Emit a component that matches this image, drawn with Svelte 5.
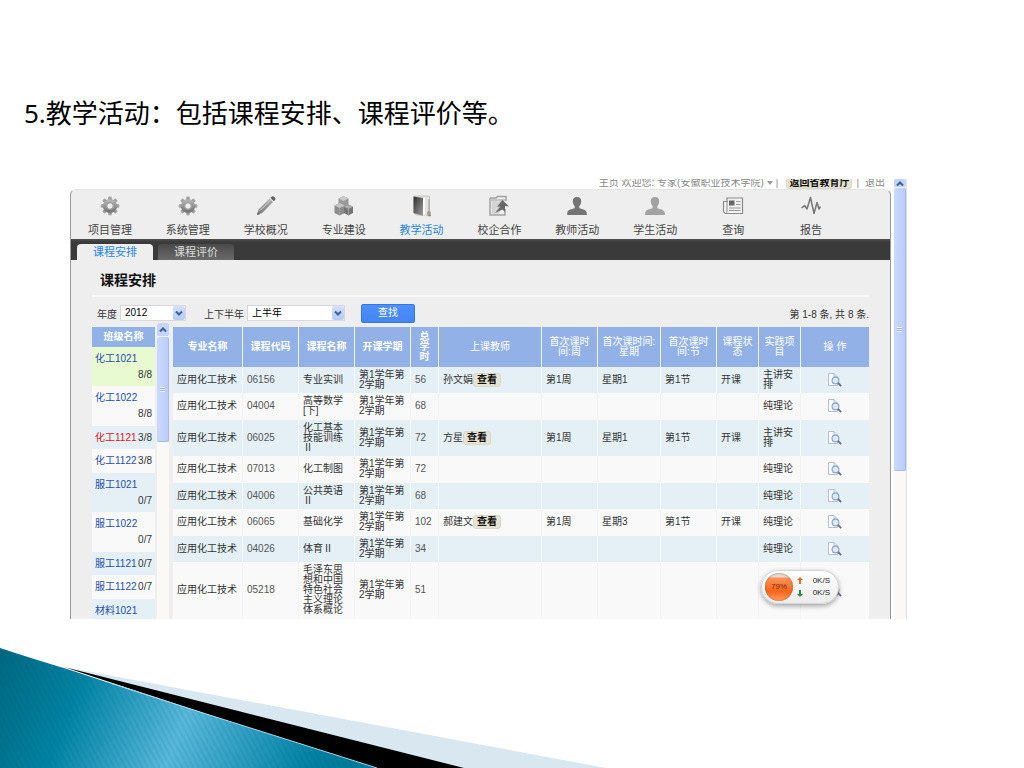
<script lang="ts">
  const nav = [
    { label: '项目管理', icon: 'gear' },
    { label: '系统管理', icon: 'gear' },
    { label: '学校概况', icon: 'pencil' },
    { label: '专业建设', icon: 'cubes' },
    { label: '教学活动', icon: 'door', active: true },
    { label: '校企合作', icon: 'share' },
    { label: '教师活动', icon: 'person' },
    { label: '学生活动', icon: 'person-light' },
    { label: '查询', icon: 'news' },
    { label: '报告', icon: 'pulse' },
  ];

  const classes = [
    { name: '化工1021', count: '8/8', stacked: true, selected: true },
    { name: '化工1022', count: '8/8', stacked: true },
    { name: '化工1121', count: '3/8', alert: true },
    { name: '化工1122', count: '3/8' },
    { name: '服工1021', count: '0/7', stacked: true },
    { name: '服工1022', count: '0/7', stacked: true },
    { name: '服工1121', count: '0/7' },
    { name: '服工1122', count: '0/7' },
    { name: '材料1021', count: '' },
  ];

  const columns = [
    { key: 'major', lines: ['专业名称'], bold: true },
    { key: 'code', lines: ['课程代码'], bold: true },
    { key: 'course', lines: ['课程名称'], bold: true },
    { key: 'term', lines: ['开课学期'], bold: true },
    { key: 'hours', lines: ['总', '学', '时'], bold: true },
    { key: 'teacher', lines: ['上课教师'] },
    { key: 'week', lines: ['首次课时', '间:周'] },
    { key: 'day', lines: ['首次课时间:', '星期'] },
    { key: 'slot', lines: ['首次课时', '间:节'] },
    { key: 'state', lines: ['课程状', '态'] },
    { key: 'kind', lines: ['实践项', '目'] },
    { key: 'action', lines: ['操 作'] },
  ];

  const major = '应用化工技术';
  const rows = [
    { code: '06156', course: ['专业实训'], hours: 56, teacher: '孙文娟', week: '第1周', day: '星期1', slot: '第1节', state: '开课', kind: ['主讲安', '排'] },
    { code: '04004', course: ['高等数学', '[下]'], hours: 68, kind: ['纯理论'] },
    { code: '06025', course: ['化工基本', '技能训练', 'Ⅱ'], hours: 72, teacher: '方星', week: '第1周', day: '星期1', slot: '第1节', state: '开课', kind: ['主讲安', '排'] },
    { code: '07013', course: ['化工制图'], hours: 72, kind: ['纯理论'] },
    { code: '04006', course: ['公共英语', 'Ⅱ'], hours: 68, kind: ['纯理论'] },
    { code: '06065', course: ['基础化学'], hours: 102, teacher: '郝建文', week: '第1周', day: '星期3', slot: '第1节', state: '开课', kind: ['纯理论'] },
    { code: '04026', course: ['体育Ⅱ'], hours: 34, kind: ['纯理论'] },
    { code: '05218', course: ['毛泽东思', '想和中国', '特色社会', '主义理论', '体系概论'], hours: 51, kind: ['纯理论'] },
  ];

  const teeth = [0, 45, 90, 135, 180, 225, 270, 315];
</script>

{#snippet stack(lines)}
  {#each lines as line, i}{#if i}<br />{/if}{line}{/each}
{/snippet}

{#snippet chevron(up)}
  <svg viewBox="0 0 10 10" width="10" height="10" aria-hidden="true">
    <path d={up ? 'M2 6.5 5 3.5 8 6.5' : 'M2 3.5 5 6.5 8 3.5'} fill="none" stroke="#3f5f9c" stroke-width="2" />
  </svg>
{/snippet}

{#snippet navIcon(kind)}
  <svg viewBox="0 0 22 22" width="22" height="22" aria-hidden="true">
    {#if kind === 'gear'}
      {#each teeth as a}
        <rect x="9.2" y="1.6" width="3.6" height="5" rx="0.8" fill="url(#metal)" transform="rotate({a} 11 11)" />
      {/each}
      <circle cx="11" cy="11" r="5.3" fill="none" stroke="url(#metal)" stroke-width="3.6" />
      <circle cx="11" cy="11" r="3.3" fill="#eee" stroke="#777" stroke-width="0.8" />
    {:else if kind === 'pencil'}
      <path d="M2 20 3.6 14.6 14.6 3.6 18 7 7.2 18Z" fill="url(#metal)" />
      <path d="M5 15.6 15.6 5" stroke="#d0d0d0" stroke-width="1" />
      <path d="M15.4 2.8 17 1.4Q18 .8 19 1.8L20.2 3Q21 4 20 5L18.8 6.2Z" fill="#606060" />
      <path d="M2 20 2.8 17.2 4.8 19.2Z" fill="#666" />
    {:else if kind === 'cubes'}
      <path d="M10.5 1 15.5 3.5V10L10.5 12.5 5.5 10V3.5Z" fill="#999" />
      <path d="M10.5 1 15.5 3.5 10.5 6 5.5 3.5Z" fill="#cacaca" />
      <path d="M6.5 8 12 10.5V18L6.5 20.5 1.5 18V10.5Z" fill="#8d8d8d" />
      <path d="M6.5 8 12 10.5 6.8 13 1.5 10.5Z" fill="#c4c4c4" />
      <path d="M15.5 9.5 20 11.7V18L15.5 20.5 11 18V11.7Z" fill="#767676" />
      <path d="M15.5 9.5 20 11.7 15.6 14 11 11.7Z" fill="#adadad" />
      <path d="M15.5 14V20.5M6.7 13V20.5" stroke="#aaa" stroke-width="0.7" />
    {:else if kind === 'door'}
      <path d="M3 1H18.5V20H5L3 18Z" fill="#e4e4e0" stroke="#b6b6b0" stroke-width="0.7" />
      <path d="M2.5 1.5 12 3V21L2.5 18Z" fill="url(#panel)" />
      <path d="M12 3 14 2V19L12 21Z" fill="#fafafa" />
      <path d="M18 4V17" stroke="#aba59a" stroke-width="1.2" />
      <circle cx="18" cy="18" r="2" fill="#a39b8d" />
      <path d="M16.5 20.5H20" stroke="#918a80" stroke-width="1.4" />
    {:else if kind === 'share'}
      <path d="M2 3H8L9.5 1.5H18V6M2 3V20H17V14" fill="none" stroke="#a2a2a2" stroke-width="1.5" />
      <path d="M3.5 19V6H16L11 19Z" fill="#d4d4d4" />
      <path d="M2 5H18" stroke="#b6b6b6" stroke-width="1.5" />
      <path d="M14.5 5 21 11.5 17 11V17L14.5 14.5 7 18 12.4 11.6 9 11.7Z" fill="#686868" />
    {:else if kind === 'person' || kind === 'person-light'}
      <path
        d="M11 2C14 2 15.4 4 15.2 6.8 15 9.2 14 10.4 13.3 11.2V13.2C16.5 14.2 20.6 14.6 20.8 18V20H1.2V18C1.4 14.6 5.5 14.2 8.7 13.2V11.2C8 10.4 7 9.2 6.8 6.8 6.6 4 8 2 11 2Z"
        fill={kind === 'person' ? '#747474' : '#a2a2a2'}
      />
    {:else if kind === 'news'}
      <path d="M5 3H20.5V18.5H3.5Q1.5 18 1.5 16V6.5H5Z" fill="#f2f2f2" stroke="#8b8b8b" stroke-width="1.2" />
      <path d="M5 6V16Q5 18 3.5 18.5" fill="none" stroke="#8b8b8b" />
      <rect x="7" y="5.5" width="5.5" height="5" fill="#666" />
      <path d="M14 6.5H18.5M14 9.5H18.5M7 13H18.5M7 15.5H18.5" stroke="#999" stroke-width="1.2" />
    {:else}
      <path d="M1.5 13 4.5 10.5 7 14 10.5 2.5 14 18.5 17 7.5 19 14 20.5 11.5" fill="none" stroke="#777" stroke-width="1.5" stroke-linejoin="round" />
    {/if}
  </svg>
{/snippet}

<svg class="defs" width="0" height="0" aria-hidden="true">
  <defs>
    <linearGradient id="metal" x1="0" y1="0" x2="0" y2="1">
      <stop offset="0" stop-color="#b2b2b2" />
      <stop offset="1" stop-color="#787878" />
    </linearGradient>
    <linearGradient id="panel" x1="0" y1="0" x2="1" y2="1">
      <stop offset="0" stop-color="#2e2e2e" />
      <stop offset="1" stop-color="#a0a0a0" />
    </linearGradient>
  </defs>
</svg>

<div class="slide">
  <h1>5.教学活动：包括课程安排、课程评价等。</h1>

  <section class="browser">
    <div class="page">
      <div class="topbar">
        <span>主页 欢迎您: 专家(安徽职业技术学院)</span>
        <svg viewBox="0 0 8 6" width="8" height="6" aria-hidden="true"><path d="M1 1H7L4 5Z" fill="#999" /></svg>
        <span>|</span>
        <button class="mini">返回省教育厅</button>
        <span>|</span>
        <a href="#logout">退出</a>
      </div>

      <div class="panel">
        <nav class="mainnav">
          {#each nav as item}
            <a href="#nav" class:active={item.active}>
              {@render navIcon(item.icon)}
              <span>{item.label}</span>
            </a>
          {/each}
        </nav>

        <div class="tabs">
          <a href="#arrange" class="current">课程安排</a>
          <a href="#review">课程评价</a>
        </div>

        <main>
          <h2>课程安排</h2>

          <form class="filters">
            <label for="year">年度</label>
            <span class="picker year">
              <select id="year"><option>2012</option></select>
              <i>{@render chevron(false)}</i>
            </span>
            <label for="half">上下半年</label>
            <span class="picker half">
              <select id="half"><option>上半年</option></select>
              <i>{@render chevron(false)}</i>
            </span>
            <button type="button" class="search">查找</button>
            <span class="total">第 1-8 条, 共 8 条.</span>
          </form>

          <div class="board">
            <table class="classes">
              <thead><tr><th>班级名称</th></tr></thead>
              <tbody>
                {#each classes as c}
                  <tr class:selected={c.selected}>
                    <td>
                      <div class="entry" class:stacked={c.stacked}>
                        <a href="#class" class:alert={c.alert}>{c.name}</a>
                        <span>{c.count}</span>
                      </div>
                    </td>
                  </tr>
                {/each}
              </tbody>
            </table>

            <div class="scroll inner">
              <span class="arrow">{@render chevron(true)}</span>
              <span class="thumb"><b></b></span>
            </div>

            <table class="courses">
              <colgroup>
                {#each columns as col}<col class={col.key} />{/each}
              </colgroup>
              <thead>
                <tr>
                  {#each columns as col}
                    <th class:bold={col.bold}>{@render stack(col.lines)}</th>
                  {/each}
                </tr>
              </thead>
              <tbody>
                {#each rows as r}
                  <tr>
                    <td>{major}</td>
                    <td class="num">{r.code}</td>
                    <td>{@render stack(r.course)}</td>
                    <td>{@render stack(['第1学年第', '2学期'])}</td>
                    <td class="num">{r.hours}</td>
                    <td>
                      {#if r.teacher}
                        <div class="who">{r.teacher}<button class="mini">查看</button></div>
                      {/if}
                    </td>
                    <td>{r.week ?? ''}</td>
                    <td>{r.day ?? ''}</td>
                    <td>{r.slot ?? ''}</td>
                    <td>{r.state ?? ''}</td>
                    <td>{@render stack(r.kind)}</td>
                    <td class="view">
                      <a href="#view" aria-label="查看">
                        <svg viewBox="0 0 14 14" width="14" height="14" aria-hidden="true">
                          <path d="M.5.5H6L9.5 4V12.5H.5Z" fill="#fbfcfe" stroke="#b3bfd0" />
                          <path d="M6 .5V4H9.5" fill="none" stroke="#b3bfd0" />
                          <circle cx="7.5" cy="7.5" r="3.4" fill="#dce9f7" stroke="#8ea6c8" stroke-width="1.2" />
                          <path d="M10 10 13.2 13.2" stroke="#6b6f80" stroke-width="1.8" />
                        </svg>
                      </a>
                    </td>
                  </tr>
                {/each}
              </tbody>
            </table>
          </div>
        </main>
      </div>
    </div>

    <div class="scroll outer">
      <span class="arrow">{@render chevron(true)}</span>
      <span class="thumb"><b></b></span>
    </div>

    <aside class="meter">
      <span class="ball">79%</span>
      <svg viewBox="0 0 6 22" width="6" height="22" aria-hidden="true">
        <path d="M3 1 6 4H4V8H2V4H0Z" fill="#ee6a1f" />
        <path d="M3 21 6 18H4V14H2V18H0Z" fill="#2c9140" />
      </svg>
      <span class="rates">0K/S<br />0K/S</span>
    </aside>
  </section>

  <svg class="swoosh" viewBox="0 0 620 128" width="620" height="128" aria-hidden="true">
    <defs>
      <linearGradient id="sea" gradientUnits="userSpaceOnUse" x1="0" y1="20" x2="320" y2="150">
        <stop offset="0" stop-color="#006981" />
        <stop offset="0.24" stop-color="#0083a3" />
        <stop offset="0.56" stop-color="#58b8db" />
        <stop offset="0.92" stop-color="#0585a6" />
        <stop offset="1" stop-color="#007c9c" />
      </linearGradient>
      <pattern id="weave" width="5" height="5" patternUnits="userSpaceOnUse" patternTransform="rotate(-28)">
        <rect width="2" height="5" fill="#003c50" opacity="0.07" />
      </pattern>
    </defs>
    <path d="M70 28 606 128H440Z" fill="#d9e8f0" />
    <path d="M64 27 464 128H370Z" fill="#000" />
    <path d="M0 8Q30 18 67 29 130 50 200 72L377 128H0Z" fill="url(#sea)" />
    <path d="M0 8Q30 18 67 29 130 50 200 72L377 128H0Z" fill="url(#weave)" />
    <path d="M110 43 200 72 377 128" fill="none" stroke="#a4d6ea" />
  </svg>
</div>

<style>
  :global(body) {
    margin: 0;
    background: #fff;
  }
  .defs {
    position: absolute;
  }
  .slide {
    min-height: 100vh;
    display: flex;
    flex-direction: column;
    font-family: 'Liberation Sans', 'Noto Sans CJK SC', sans-serif;
    font-size: 10px;
    line-height: 10px;
    color: #333;
  }
  h1 {
    margin: 95px 24px 48px;
    font: 400 26px/36px 'Noto Sans', 'Noto Sans CJK SC', sans-serif;
    color: #000;
  }
  a {
    color: inherit;
    text-decoration: none;
  }
  button,
  select {
    font: inherit;
    margin: 0;
  }

  .browser {
    position: relative;
    display: flex;
    gap: 3px;
    margin: 0 117px 0 70px;
    overflow: hidden;
  }
  .page {
    flex: 1;
    min-width: 0;
    display: flex;
    flex-direction: column;
  }
  .topbar {
    display: flex;
    justify-content: flex-end;
    align-items: center;
    gap: 2px;
    height: 12px;
    margin-top: -2px;
    padding-right: 6px;
    color: #888;
  }
  .topbar .mini {
    margin: 0 2px 0 6px;
    padding: 0 2px;
    height: 12px;
    line-height: 10px;
  }
  .topbar a {
    margin-left: 4px;
  }
  .mini {
    padding: 0 3px;
    height: 14px;
    line-height: 12px;
    font-weight: 700;
    color: #111;
    background: #e6e3d3;
    border: 1px solid #dad7c9;
    border-radius: 3px;
  }

  .panel {
    flex: 1;
    display: flex;
    flex-direction: column;
    background: #eee;
    border: solid #999;
    border-width: 0 1px;
    border-top: 1px solid #e4e4e4;
    border-radius: 6px 6px 0 0;
    overflow: hidden;
  }
  .mainnav {
    display: grid;
    grid-template-columns: repeat(10, 1fr);
    padding: 5px 40px 2px 0;
    font-size: 11px;
    line-height: 14px;
    color: #444;
  }
  .mainnav a {
    display: flex;
    flex-direction: column;
    align-items: center;
    gap: 6px;
  }
  .mainnav .active {
    color: #1f86e5;
  }
  .tabs {
    display: flex;
    gap: 5px;
    padding: 5px 6px 0;
    background: linear-gradient(#505050, #3a3a3a 3px);
    font-size: 11px;
    line-height: 16px;
    text-align: center;
    color: #ddd;
  }
  .tabs a {
    width: 76px;
    border-radius: 4px 4px 0 0;
    background: linear-gradient(#4a4a4a, #6a6a6a);
  }
  .tabs .current {
    background: #eee;
    color: #1f86e5;
  }

  main {
    flex: 1;
    display: flex;
    flex-direction: column;
    padding: 10px 21px 0;
  }
  h2 {
    margin: 0;
    padding: 0 8px 5px;
    border-bottom: 2px solid #f8f8f8;
    font-size: 14px;
    line-height: 20px;
    color: #111;
  }
  .filters {
    display: flex;
    align-items: center;
    height: 20px;
    padding: 6px 0 0 5px;
  }
  label,
  .total {
    padding-top: 3px;
  }
  .picker {
    display: grid;
    height: 16px;
    margin: 0 18px 0 3px;
    border: 1px solid #d8d8dc;
    background: #fff;
    box-sizing: border-box;
  }
  .picker.year {
    width: 66px;
  }
  .picker.half {
    width: 98px;
    margin-right: 16px;
  }
  .picker select,
  .picker i {
    grid-area: 1 / 1;
  }
  select {
    appearance: none;
    border: 0;
    padding: 0 4px;
    background: none;
    color: #000;
    min-width: 0;
  }
  .picker i {
    justify-self: end;
    display: grid;
    place-items: center;
    width: 12px;
    background: linear-gradient(#d4e0fb, #b6caf6);
    border-radius: 2px;
    pointer-events: none;
  }
  .search {
    width: 54px;
    height: 19px;
    padding: 0;
    border: 1px solid #3079ed;
    border-radius: 2px;
    background: linear-gradient(#4d90fe, #4485f3);
    color: #fff;
  }
  .total {
    margin-left: auto;
  }

  .board {
    flex: 1;
    display: grid;
    grid-template-columns: 63px 12px minmax(0, 1fr);
    column-gap: 3px;
    align-items: start;
    padding-top: 4px;
  }
  table {
    width: 100%;
    border-collapse: separate;
    border-spacing: 0;
  }
  th {
    padding: 0;
    background: #92b2e7;
    color: #fff;
    font-weight: 400;
  }
  .classes th {
    height: 20px;
    font-size: 10px;
    font-weight: 700;
  }
  .classes td {
    padding: 4px 3px 3px;
    background: #e4f0f5;
  }
  .classes tr:nth-child(even) td {
    padding-bottom: 4px;
    background: #f9f9f9;
  }
  .classes tr:last-child td {
    padding-bottom: 0;
  }
  .classes .selected td {
    background: #e8fad0;
  }
  .entry {
    display: flex;
    justify-content: space-between;
    line-height: 16px;
  }
  .entry.stacked {
    flex-direction: column;
  }
  .entry.stacked span {
    align-self: flex-end;
  }
  .entry a {
    color: #1d4fae;
  }
  .entry .alert {
    color: #e01020;
  }

  .courses {
    table-layout: fixed;
  }
  .courses th {
    height: 40px;
    border-right: 1px solid #f2f6fc;
  }
  .courses th.bold {
    font-weight: 700;
  }
  .courses td {
    padding: 3px 0 3px 4px;
    background: #e4f0f5;
    border-right: 1px solid #f6fafb;
    white-space: nowrap;
  }
  .courses tr:nth-child(even) td {
    padding-bottom: 4px;
    background: #f9f9f9;
    border-right-color: #f0f4f6;
  }
  .courses th:last-child,
  .courses td:last-child {
    border-right: 0;
  }
  .courses .num {
    color: #555;
  }
  .who {
    display: flex;
    align-items: center;
  }
  .courses .view {
    padding-left: 0;
    text-align: center;
  }
  .view svg {
    display: block;
    margin: 0 auto;
  }
  .major {
    width: 70px;
  }
  .code,
  .course,
  .term,
  .week,
  .slot {
    width: 56px;
  }
  .hours {
    width: 28px;
  }
  .day {
    width: 63px;
  }
  .state,
  .kind {
    width: 42px;
  }
  .action {
    width: 68px;
  }

  .scroll {
    display: flex;
    flex-direction: column;
    background: #fbf9f5;
  }
  .arrow {
    display: grid;
    place-items: center;
    height: 13px;
    background: #c4d4fa;
    border-bottom: 1px solid #f0f4fe;
    border-radius: 2px;
  }
  .thumb {
    display: grid;
    place-items: center;
    background: linear-gradient(90deg, #cbd9fd, #b9cdfb);
    border: solid #a3b9ee;
    border-width: 0 1px 1px 0;
    border-radius: 2px;
  }
  .thumb b {
    width: 5px;
    height: 5px;
    background: repeating-linear-gradient(#edf2fe 0 1px, #9db5ec 1px 2px);
  }
  .inner {
    align-self: stretch;
    margin: -4px 1px 0 -1px;
  }
  .inner .thumb {
    height: 104px;
  }
  .outer {
    width: 12px;
    border-right: 1px solid #e2e2e2;
  }
  .outer .arrow {
    height: 8px;
    align-items: end;
  }
  .outer .thumb {
    height: 282px;
  }

  .meter {
    position: absolute;
    right: 68px;
    bottom: 15px;
    display: flex;
    align-items: center;
    gap: 4px;
    width: 78px;
    height: 34px;
    padding: 0 8px 0 3px;
    box-sizing: border-box;
    border: 1px solid #d4d4d4;
    border-radius: 17px;
    background: linear-gradient(#fff, #ececec);
    box-shadow: 0 2px 5px rgba(0, 0, 0, 0.35);
    font-size: 8px;
    line-height: 12px;
    color: #222;
  }
  .ball {
    width: 28px;
    height: 28px;
    border-radius: 50%;
    box-shadow: inset 0 0 2px #a55a30;
    background: linear-gradient(#dcdcd8 14%, #ff9458 18%, #f8641c 65%, #ffa05e);
    line-height: 28px;
    text-align: center;
    color: #6b3014;
  }
  .rates {
    margin-left: auto;
  }

  .swoosh {
    display: block;
    margin-top: auto;
    max-width: 100%;
  }
</style>
